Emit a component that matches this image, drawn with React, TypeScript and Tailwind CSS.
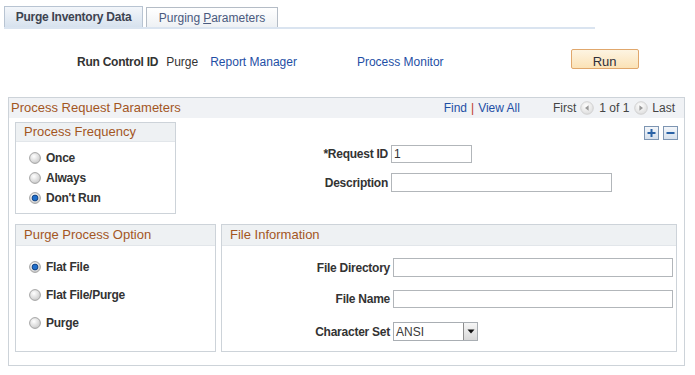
import React from "react";

const brown = "text-[#a3561f]";
const link = "text-[#1e4fa5]";
const boldLabel = "font-bold tracking-[-0.25px]";

function Radio({ checked }: { checked?: boolean }) {
  return (
    <svg width="12" height="12" viewBox="0 0 12 12" className="shrink-0">
      <defs>
        <radialGradient id="radioFill" cx="40%" cy="35%" r="75%">
          <stop offset="0" stopColor="#ffffff" />
          <stop offset="1" stopColor="#c4c4c4" />
        </radialGradient>
      </defs>
      <circle cx="6" cy="6" r="5.4" fill="url(#radioFill)" stroke="#9c9c9c" strokeWidth="0.9" />
      {checked && <circle cx="6" cy="6" r="2.9" fill="#1f6fcc" stroke="#0c3b7a" strokeWidth="0.9" />}
    </svg>
  );
}

function NavArrow({ dir }: { dir: "left" | "right" }) {
  return (
    <svg width="14" height="14" viewBox="0 0 14 14" className="shrink-0">
      <defs>
        <radialGradient id="navFill" cx="45%" cy="35%" r="75%">
          <stop offset="0" stopColor="#ffffff" />
          <stop offset="1" stopColor="#d8d8d8" />
        </radialGradient>
      </defs>
      <circle cx="7" cy="7" r="6.3" fill="url(#navFill)" stroke="#cccccc" strokeWidth="0.8" />
      {dir === "left" ? (
        <path d="M8.6 4.2 L5 7 L8.6 9.8 Z" fill="#999999" />
      ) : (
        <path d="M5.4 4.2 L9 7 L5.4 9.8 Z" fill="#999999" />
      )}
    </svg>
  );
}

function RowButton({ sign }: { sign: "+" | "-" }) {
  return (
    <div className="w-[15px] h-[14px] border border-[#7d95b2] bg-gradient-to-b from-[#f3f6fa] to-[#d6e0ec] flex items-center justify-center">
      <svg width="11" height="10" viewBox="0 0 11 10">
        <rect x="1.5" y="4" width="8" height="2" fill="#2a62a6" />
        {sign === "+" && <rect x="4.5" y="1" width="2" height="8" fill="#2a62a6" />}
      </svg>
    </div>
  );
}

function BoxHeader({ title, h }: { title: string; h: string }) {
  return (
    <div className={`${h} bg-[#eef1f3] border-b border-[#e2e6ea] flex items-center pl-[8px] text-[13px] ${brown}`}>
      {title}
    </div>
  );
}

function RadioRow({ label, checked, h }: { label: string; checked?: boolean; h: string }) {
  return (
    <div className={`${h} flex items-center gap-[5px] pl-[13px] ${boldLabel}`}>
      <Radio checked={checked} />
      <span>{label}</span>
    </div>
  );
}

export default function App() {
  return (
    <div className="w-[695px] h-[375px] overflow-hidden bg-white text-[12px] leading-[14px] text-[#333] font-['Liberation_Sans',Arial,sans-serif]">
      {/* tabs */}
      <div className="pt-[6px] pl-[4px]">
        <div className="flex items-end gap-[3px] w-[591px] border-b-2 border-[#dae4f0]">
          <div className={`w-[139px] h-[21px] border border-b-0 border-[#b8c4d2] bg-gradient-to-b from-[#f3f6fa] to-[#d7e2ee] flex items-center justify-center text-[#3d4350] ${boldLabel}`}>
            Purge Inventory Data
          </div>
          <div className="w-[132px] h-[20px] border border-b-0 border-[#b4bcc6] bg-gradient-to-b from-[#ffffff] to-[#eef1f4] flex items-center justify-center text-[#4a5a7e]">
            Purging <span className="underline ml-[3px]">P</span>arameters
          </div>
        </div>
      </div>

      {/* run control row */}
      <div className="mt-[20px] h-[20px] flex items-start pl-[77px]">
        <span className={`mt-[6px] ${boldLabel}`}>Run Control ID</span>
        <span className="mt-[6px] ml-[8px]">Purge</span>
        <span className={`mt-[6px] ml-[12px] ${link}`}>Report Manager</span>
        <span className={`mt-[6px] ml-[60px] ${link}`}>Process Monitor</span>
        <div className="ml-[127px] w-[68px] h-[20px] border border-[#e0a76c] rounded-[2px] bg-gradient-to-b from-[#fdf4e2] to-[#fbe2b6] flex justify-center pt-[5px] text-[13px] leading-[14px] text-[#2f2f3a]">
          Run
        </div>
      </div>

      {/* main group box */}
      <div className="mt-[28px] ml-[8px] w-[677px] h-[269px] border border-[#cdd3d9]">
        <div className="h-[20px] bg-[#f0f2f5] flex items-center justify-between pl-[2px] pr-[9px]">
          <span className={`text-[13px] ${brown}`}>Process Request Parameters</span>
          <div className="flex items-center">
            <span className={link}>Find</span>
            <span className="mx-[4px] text-[#c0392b]">|</span>
            <span className={link}>View All</span>
            <span className="ml-[33px] text-[#444]">First</span>
            <span className="ml-[4px]"><NavArrow dir="left" /></span>
            <span className="ml-[5px] text-[#444]">1 of 1</span>
            <span className="ml-[5px]"><NavArrow dir="right" /></span>
            <span className="ml-[4px] text-[#444]">Last</span>
          </div>
        </div>

        {/* row 1 */}
        <div className="flex mt-[4px]">
          <div className="ml-[6px] w-[161px] h-[92px] border border-[#cdd3d9]">
            <BoxHeader title="Process Frequency" h="h-[19px]" />
            <div className="pt-[6px]">
              <RadioRow label="Once" h="h-[20px]" />
              <RadioRow label="Always" h="h-[20px]" />
              <RadioRow label="Don't Run" checked h="h-[20px]" />
            </div>
          </div>
          <div className="flex-1">
            <div className="flex justify-end gap-[4px] pr-[6px] mt-[4px]">
              <RowButton sign="+" />
              <RowButton sign="-" />
            </div>
            <div className="flex items-center mt-[5px]">
              <span className={`w-[215px] pr-[3px] text-right ${boldLabel}`}>*Request ID</span>
              <div className="w-[81px] h-[18px] border border-[#b2b6ba] px-[2px] flex items-center">1</div>
            </div>
            <div className="flex items-center mt-[10px]">
              <span className={`w-[215px] pr-[3px] text-right ${boldLabel}`}>Description</span>
              <div className="w-[221px] h-[19px] border border-[#b2b6ba]" />
            </div>
          </div>
        </div>

        {/* row 2 */}
        <div className="flex mt-[10px]">
          <div className="ml-[6px] w-[201px] h-[128px] border border-[#cdd3d9]">
            <BoxHeader title="Purge Process Option" h="h-[21px]" />
            <div className="pt-[7px]">
              <RadioRow label="Flat File" checked h="h-[28px]" />
              <RadioRow label="Flat File/Purge" h="h-[28px]" />
              <RadioRow label="Purge" h="h-[28px]" />
            </div>
          </div>
          <div className="ml-[5px] w-[456px] h-[128px] border border-[#cdd3d9]">
            <BoxHeader title="File Information" h="h-[21px]" />
            <div className="flex items-center mt-[12px]">
              <span className={`w-[171px] pr-[3px] text-right ${boldLabel}`}>File Directory</span>
              <div className="w-[280px] h-[19px] border border-[#b2b6ba]" />
            </div>
            <div className="flex items-center mt-[13px]">
              <span className={`w-[171px] pr-[3px] text-right ${boldLabel}`}>File Name</span>
              <div className="w-[280px] h-[18px] border border-[#b2b6ba]" />
            </div>
            <div className="flex items-center mt-[14px]">
              <span className={`w-[171px] pr-[3px] text-right ${boldLabel}`}>Character Set</span>
              <div className="w-[85px] h-[19px] border border-[#a9aeb3] flex items-center justify-between">
                <span className="pl-[2px] text-[#3a3a3a]">ANSI</span>
                <div className="w-[14px] h-[17px] border-l border-[#8c8c8c] bg-gradient-to-b from-[#f6f6f6] to-[#d8d8d8] flex items-center justify-center">
                  <svg width="8" height="5" viewBox="0 0 8 5">
                    <path d="M0.5 0.5 L7.5 0.5 L4 4.5 Z" fill="#111" />
                  </svg>
                </div>
              </div>
            </div>
          </div>
        </div>
      </div>
    </div>
  );
}
